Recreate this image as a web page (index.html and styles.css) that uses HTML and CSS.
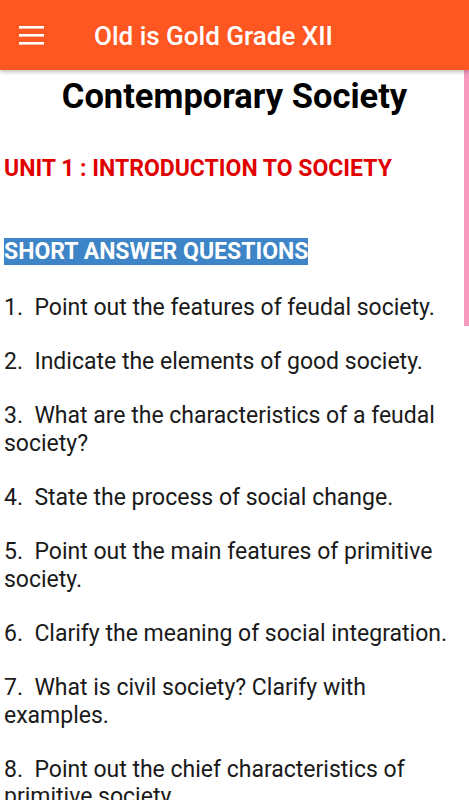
FILE: index.html
```html
<!DOCTYPE html>
<html>
<head>
<meta charset="utf-8">
<link rel="stylesheet" href="styles.css">
</head>
<body>
<header class="appbar">
  <svg class="menu" width="26" height="20" viewBox="0 0 26 20"><rect x="0" y="1" width="25" height="2.6" fill="#fff"/><rect x="0" y="9" width="25" height="2.6" fill="#fff"/><rect x="0" y="17" width="25" height="2.6" fill="#fff"/></svg>
  <span class="apptitle">Old is Gold Grade XII</span>
</header>
<div class="scrollbar"></div>
<main class="content">
  <h1 class="title">Contemporary Society</h1>
  <p class="unit">UNIT 1 : INTRODUCTION TO SOCIETY</p>
  <p class="section"><span class="hl">SHORT ANSWER QUESTIONS</span></p>
  <p class="q first">1.&nbsp; Point out the features of feudal society.</p>
  <p class="q">2.&nbsp; Indicate the elements of good society.</p>
  <p class="q">3.&nbsp; What are the characteristics of a feudal society?</p>
  <p class="q">4.&nbsp; State the process of social change.</p>
  <p class="q">5.&nbsp; Point out the main features of primitive society.</p>
  <p class="q">6.&nbsp; Clarify the meaning of social integration.</p>
  <p class="q">7.&nbsp; What is civil society? Clarify with examples.</p>
  <p class="q">8.&nbsp; Point out the chief characteristics of primitive society.</p>
</main>
</body>
</html>
```
FILE: styles.css
```css
html, body { margin: 0; padding: 0; }
body { font-family: Roboto, "Noto Sans", sans-serif; background: #fff; color: #1a1a1a; width: 469px; height: 800px; overflow: hidden; position: relative; }
.appbar { height: 70px; background: #ff5722; display: flex; align-items: center; padding-left: 19px; box-shadow: 0 2px 4px rgba(0,0,0,0.25); position: relative; z-index: 2; }
.menu { display: block; }
.apptitle { color: #fff; font-size: 26px; font-weight: 500; margin-left: 49px; margin-top: 2px; }
.scrollbar { position: absolute; right: 0; top: 70px; width: 5px; height: 256px; background: #f69bbd; }
.content { padding: 0 4px; }
.title { margin: 6px 0 0; font-size: 34.5px; font-weight: 700; text-align: center; line-height: 40px; color: #000; }
.unit { margin: 39px 0 0; color: #e00000; font-size: 23px; font-weight: 700; line-height: 27.2px; }
.section { margin: 56px 0 0; font-size: 23px; font-weight: 700; line-height: 27.2px; }
.hl { background: #3d85c6; color: #fff; }
.q { margin: 27.2px 0 0; font-size: 23px; line-height: 27.2px; }
.q.first { margin-top: 28.2px; }
```
